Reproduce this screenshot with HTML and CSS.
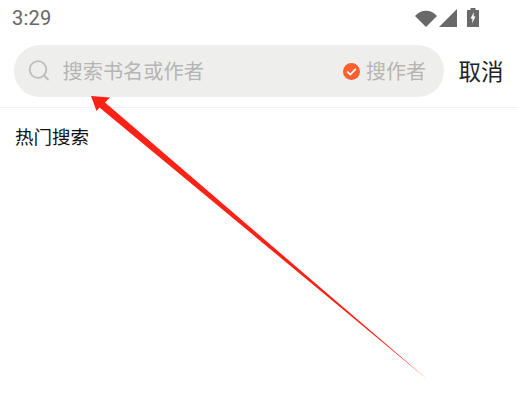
FILE: index.html
```html
<!DOCTYPE html>
<html lang="zh-CN">

<head>
    <meta charset="UTF-8">
    <title>搜索</title>
    <link rel="stylesheet" href="styles.css">
</head>

<body>

    <header class="status">
        <span class="time">3:29</span>
        <div class="status-icons">
            <svg width="22" height="18" viewBox="0 0 22 18">
                <path d="M0 7C6 0 16 0 22 7L11 18Z" fill="#696969" />
            </svg>
            <svg class="signal" width="18" height="18" viewBox="0 0 18 18">
                <path d="M18 0V18H0Z" fill="#696969" />
            </svg>
            <svg class="battery" width="12" height="19" viewBox="0 0 12 19">
                <path d="M3.500 0H8.500V2H12V19H0V2H3.500Z" fill="#696969" />
                <path d="M7 4L3.500 10.500H5.500L5 15.500L8.500 8.500H6.500Z" fill="#fff" />
            </svg>
        </div>
    </header>

    <div class="search-row">
        <div class="search-box">
            <svg class="search-icon" width="22" height="22" viewBox="0 0 22 22">
                <circle cx="10" cy="9.500" r="8.300" fill="none" stroke="#bdbdbb" stroke-width="1.800" />
                <path d="M16 15.500L20 19.500" stroke="#bdbdbb" stroke-width="1.800" stroke-linecap="round" />
            </svg>
            <span class="placeholder">搜索书名或作者</span>
            <svg class="check" width="17" height="17" viewBox="0 0 17 17">
                <circle cx="8.500" cy="8.500" r="8.500" fill="#fb5f32" />
                <path d="M4.200 8.600L7.300 11.500L12.800 5.800" fill="none" stroke="#fff" stroke-width="1.800" />
            </svg>
            <span class="author">搜作者</span>
        </div>
        <span class="cancel">取消</span>
    </div>

    <section class="hot">
        <h2>热门搜索</h2>
    </section>

    <!-- arrow drawn over the screenshot -->
    <svg class="arrow" width="517" height="405" viewBox="0 0 517 405">
        <path d="M91 96L110 97.500L105 102.500L428 380L99.500 107.500L96.500 111Z" fill="#ff2016" />
    </svg>

</body>

</html>
```

FILE: styles.css
```css
body {
    margin: 0;
    background-color: #fff;
    font-family: "Noto Sans CJK SC", "Noto Sans", sans-serif;
    position: relative;
    height: 405px;
    overflow: hidden;
}

.status {
    height: 35px;
    padding: 0 38px 0 12px;
    display: flex;
    align-items: center;
    justify-content: space-between;
}

.time {
    font-family: Roboto, sans-serif;
    font-size: 20px;
    font-weight: 400;
    color: #666;
    letter-spacing: 0.2px;
}

.status-icons {
    display: flex;
    align-items: center;
}

.status-icons .signal {
    margin-left: 2px;
}

.status-icons .battery {
    margin-left: 10px;
}

.search-row {
    margin-top: 10px;
    height: 52px;
    padding: 0 0 0 14px;
    display: flex;
    align-items: center;
}

.search-box {
    flex: none;
    width: 430px;
    height: 52px;
    box-sizing: border-box;
    padding: 0 18px 0 14px;
    background-color: #eeeeec;
    border-radius: 26px;
    display: flex;
    align-items: center;
}

.search-icon {
    flex: none;
}

.placeholder {
    margin-left: 12.500px;
    padding-bottom: 2px;
    font-size: 20.200px;
    color: #b5b5b3;
    flex: 1;
}

.check {
    flex: none;
    margin-right: 6px;
}

.author {
    padding-bottom: 2px;
    font-size: 20px;
    color: #b5b5b3;
}

.cancel {
    margin-left: 14.500px;
    padding-bottom: 3px;
    font-size: 22.500px;
    color: #222;
    white-space: nowrap;
}

.hot {
    margin-top: 10px;
    border-top: 1px solid #f2f2f2;
    padding: 16px 15px 0;
}

.hot h2 {
    margin: 0;
    font-size: 18.500px;
    font-weight: 400;
    color: #111;
    line-height: 24px;
}

.arrow {
    position: absolute;
    left: 0;
    top: 0;
}
```
